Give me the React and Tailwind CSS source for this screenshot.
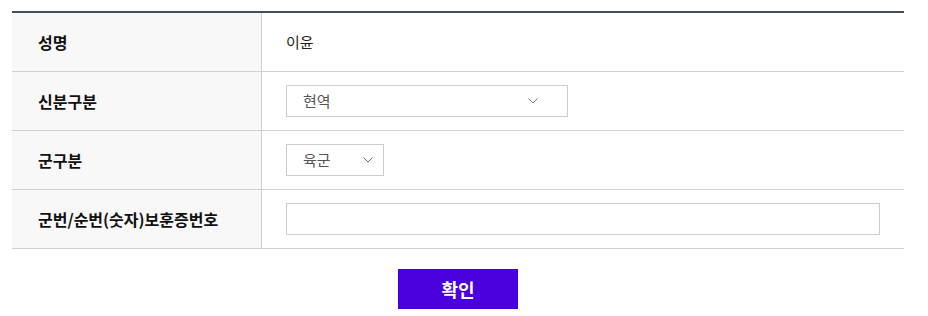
import { useState } from 'react'

const font = { fontFamily: '"Noto Sans CJK KR", "Noto Sans", sans-serif' }

function Chevron() {
  return (
    <svg width="10" height="6" viewBox="0 0 10 6" fill="none" className="shrink-0">
      <path d="M0.5 0.5L5 5L9.5 0.5" stroke="#777" strokeWidth="1" />
    </svg>
  )
}

function Row({ label, children }) {
  return (
    <div className="grid h-[59px] grid-cols-[250px_1fr] border-b border-[#d0d0d0]">
      <div className="flex items-center border-r border-[#d0d0d0] bg-[#f8f8f8] pl-[26px] text-[16px] font-bold text-[#111]">
        {label}
      </div>
      <div className="flex items-center pl-[24px] pr-[24px]">{children}</div>
    </div>
  )
}

export default function App() {
  const [num, setNum] = useState('')

  return (
    <div className="bg-white pt-[11px]" style={font}>
      <div className="mx-[12px] w-[892px]">
        <div className="border-t-2 border-[#464c66]">
          <Row label="성명">
            <span className="text-[15px] text-[#222]">이윤</span>
          </Row>
          <Row label="신분구분">
            <div className="flex h-[32px] w-[282px] items-center justify-between border border-[#cccccc] pl-[16px] pr-[29px] text-[15px] text-[#555]">
              <span>현역</span>
              <Chevron />
            </div>
          </Row>
          <Row label="군구분">
            <div className="flex h-[32px] w-[98px] items-center justify-between border border-[#cccccc] pl-[16px] pr-[10px] text-[15px] text-[#555]">
              <span>육군</span>
              <Chevron />
            </div>
          </Row>
          <Row label="군번/순번(숫자)보훈증번호">
            <input
              value={num}
              onChange={(e) => setNum(e.target.value)}
              className="h-[32px] w-full border border-[#cccccc] px-3 text-[15px] outline-none"
            />
          </Row>
        </div>
        <div className="flex justify-center pt-[20px]">
          <button className="h-[40px] w-[120px] bg-[#4b00de] text-[18px] font-bold text-white">확인</button>
        </div>
      </div>
    </div>
  )
}
